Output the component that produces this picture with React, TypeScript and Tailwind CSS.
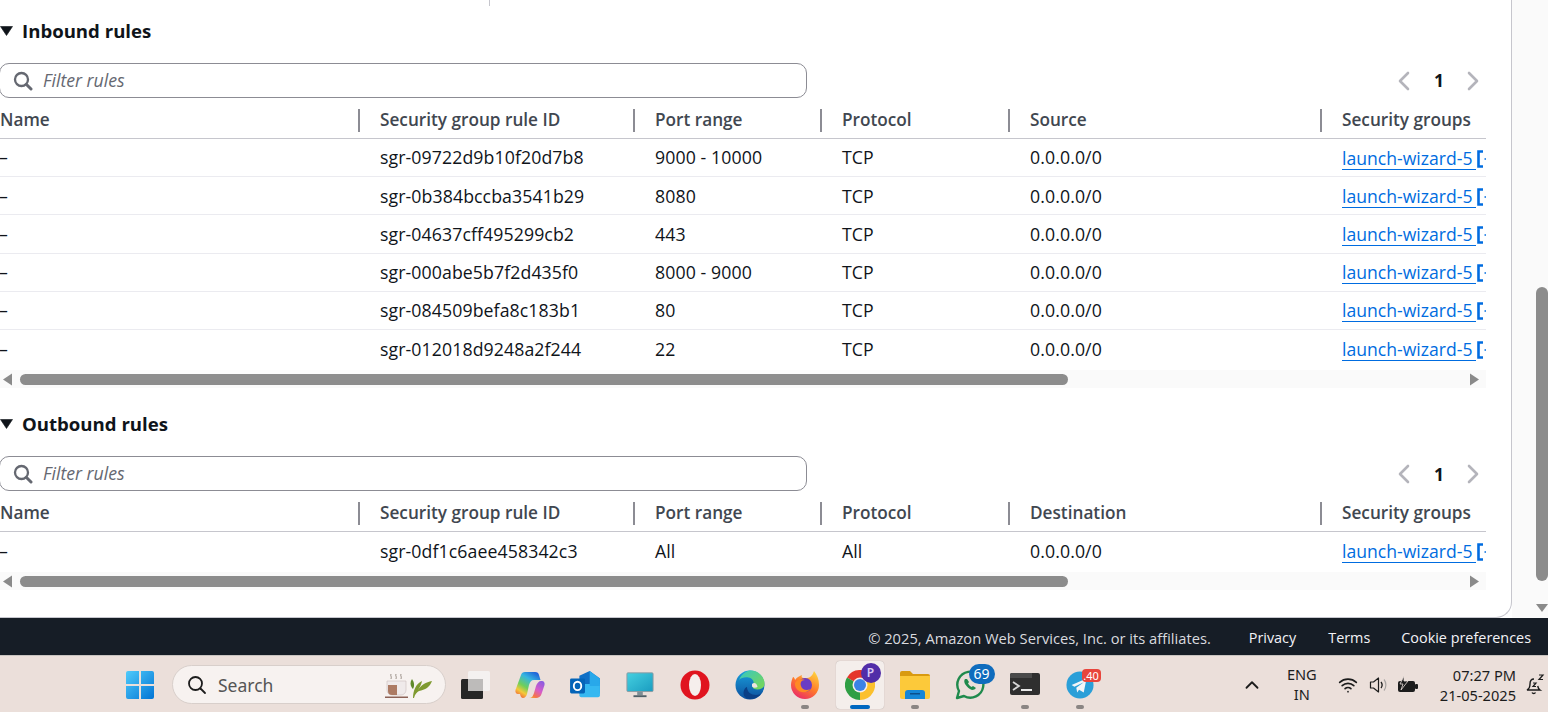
import { ChevronUp, Wifi } from "lucide-react";

const inbound = [
  { id: "sgr-09722d9b10f20d7b8", port: "9000 - 10000" },
  { id: "sgr-0b384bccba3541b29", port: "8080" },
  { id: "sgr-04637cff495299cb2", port: "443" },
  { id: "sgr-000abe5b7f2d435f0", port: "8000 - 9000" },
  { id: "sgr-084509befa8c183b1", port: "80" },
  { id: "sgr-012018d9248a2f244", port: "22" },
];

const colsClass = "grid grid-cols-[358px_275px_187px_188px_312px_166px]";

function HeaderCell({ label, first }: { label: string; first?: boolean }) {
  return (
    <div className={`flex h-[23px] items-center whitespace-nowrap pb-[2px] ${first ? "" : "border-l-2 border-[#8c8c94] pl-[20px]"}`}>
      <span className="text-[17.2px] font-semibold text-[#414750]">{label}</span>
    </div>
  );
}

function Row({ id, port, protocol, source, last }: { id: string; port: string; protocol: string; source: string; last?: boolean }) {
  return (
    <div className={`${colsClass} h-[38.2px] items-center text-[17.7px] tracking-[0.1px] text-[#0f141a] ${last ? "" : "border-b border-[#ebebf0]"}`}>
      <div className="-ml-px font-medium">–</div>
      <div className="pl-[22px]">{id}</div>
      <div className="pl-[22px]">{port}</div>
      <div className="pl-[22px]">{protocol}</div>
      <div className="pl-[22px]">{source}</div>
      <div className="flex items-center overflow-hidden whitespace-nowrap pl-[22px] pt-[2px]">
        <span className="shrink-0 border-b border-[#006ce0] pr-[4px] text-[17.6px] leading-[21px] tracking-normal text-[#006ce0]">launch-wizard-5</span>
        <svg width="10" height="18" viewBox="0 0 10 18" className="ml-[1px] shrink-0" fill="none" stroke="#006ce0">
          <path d="M6 1.500H1.500v15H6" strokeWidth="2.600" />
          <path d="M7.500 9H10" strokeWidth="1.400" />
        </svg>
      </div>
    </div>
  );
}

function HScroll() {
  return (
    <div className="mt-[2px] flex h-[18px] w-[1486px] items-center bg-[#fafafa]">
      <svg width="12" height="13" viewBox="0 0 12 13" className="ml-[1px] shrink-0"><path d="M11 .5v12L2 6.500z" fill="#8a8a8a" /></svg>
      <div className="ml-[7px] h-[11px] w-[1048px] rounded-full bg-[#8c8c8c]" />
      <svg width="12" height="13" viewBox="0 0 12 13" className="ml-auto mr-[5px] shrink-0"><path d="M1 .5v12l9-6z" fill="#8a8a8a" /></svg>
    </div>
  );
}

function RulesSection({ title, lastCol, children }: { title: string; lastCol: string; children: React.ReactNode }) {
  return (
    <section>
      <div className="flex h-[24px] items-center">
        <svg width="13" height="10" viewBox="0 0 13 10" className="shrink-0"><path d="M0.500 .5h12L6.500 9.500z" fill="#0f141a" stroke="#0f141a" strokeWidth=".6" strokeLinejoin="round" /></svg>
        <h2 className="ml-[9px] text-[18.6px] font-bold text-[#0f141a]">{title}</h2>
      </div>
      <div className="mt-[20px] flex w-[1486px] items-center justify-between">
        <div className="flex h-[35px] w-[808px] -translate-x-[1px] items-center rounded-[10px] border border-[#8c8c94] pl-[13px]">
          <svg width="20" height="20" viewBox="0 0 20 20" fill="none" stroke="#656871" strokeLinecap="round">
            <circle cx="8.500" cy="8.500" r="6.500" strokeWidth="2.300" />
            <path d="M13.500 13.500L18 18" strokeWidth="3" />
          </svg>
          <span className="ml-[10px] text-[17.7px] italic text-[#656871]">Filter rules</span>
        </div>
        <div className="flex items-center">
          <svg width="12" height="20" viewBox="0 0 12 20" fill="none" stroke="#b4b4bb" strokeWidth="2.600" strokeLinecap="round" strokeLinejoin="round"><path d="M10 2L2 10l8 8" /></svg>
          <span className="mx-[24px] w-[9px] text-center text-[17.5px] font-bold text-[#0f141a]">1</span>
          <svg width="12" height="20" viewBox="0 0 12 20" fill="none" stroke="#b4b4bb" strokeWidth="2.600" strokeLinecap="round" strokeLinejoin="round" className="mr-[7px]"><path d="M2 2l8 8-8 8" /></svg>
        </div>
      </div>
      <div className="mt-[11px] w-[1486px] overflow-hidden">
        <div className={`${colsClass} h-[30px] items-start border-b border-[#c6c6cd]`}>
          <HeaderCell first label="Name" />
          <HeaderCell label="Security group rule ID" />
          <HeaderCell label="Port range" />
          <HeaderCell label="Protocol" />
          <HeaderCell label={lastCol} />
          <HeaderCell label="Security groups" />
        </div>
        {children}
      </div>
      <HScroll />
    </section>
  );
}

function WinLogo() {
  return (
    <svg width="30" height="30" viewBox="0 0 30 30">
      <defs>
        <linearGradient id="win" x1="0" y1="0" x2="1" y2="1">
          <stop offset="0" stopColor="#4fcbfb" />
          <stop offset="1" stopColor="#0274d4" />
        </linearGradient>
      </defs>
      <path d="M1 3a2 2 0 0 1 2-2h11v13H1zM16 1h11a2 2 0 0 1 2 2v11H16zM1 16h13v13H3a2 2 0 0 1-2-2zM16 16h13v11a2 2 0 0 1-2 2H16z" fill="url(#win)" />
    </svg>
  );
}

function TeaLeaf() {
  return (
    <svg width="54" height="30" viewBox="0 0 54 30">
      <path d="M7 4c-1 2 1 2 0 5M12 4c-1 2 1 2 0 5M17 4c-1 2 1 2 0 5" stroke="#9a9088" fill="none" />
      <path d="M3 11h19v9a5 5 0 0 1-5 5H8a5 5 0 0 1-5-5z" fill="#efeaea" stroke="#c9bdbd" strokeWidth=".6" />
      <path d="M4 15h9v10H8a4 4 0 0 1-4-4z" fill="#ac7a63" />
      <path d="M1 26.500h23v1.500H1z" fill="#8c6256" />
      <path d="M29 28c0-8 3-14 9-17-1 5-3 7-4 9 3-5 8-8 14-9-2 6-7 9-13 10-2 1-4 3-5 7z" fill="#7f9a30" />
      <path d="M28 18c-2-3-2-6 0-9 2 3 3 6 1 10z" fill="#5f8a2a" />
    </svg>
  );
}

function StackIcon() {
  return (
    <svg width="30" height="28" viewBox="0 0 30 28">
      <rect x="1" y="8" width="22" height="20" rx="1.500" fill="#262626" />
      <rect x="8" y="0" width="22" height="20" rx="1.500" fill="#f4f1f0" />
      <rect x="8" y="8" width="15" height="12" fill="#bdbbba" />
    </svg>
  );
}

function CopilotIcon() {
  return (
    <svg width="30" height="28" viewBox="0 0 30 28">
      <defs>
        <linearGradient id="cpa" x1="0.800" y1="0" x2="0.200" y2="1">
          <stop offset="0" stopColor="#1f5fd8" />
          <stop offset=".3" stopColor="#35b6e0" />
          <stop offset=".6" stopColor="#6fcf5a" />
          <stop offset=".8" stopColor="#f5c93a" />
          <stop offset="1" stopColor="#f0603a" />
        </linearGradient>
        <linearGradient id="cpb" x1="0.800" y1="0" x2="0.200" y2="1">
          <stop offset="0" stopColor="#8a5ce0" />
          <stop offset=".5" stopColor="#d85cc8" />
          <stop offset=".85" stopColor="#f5744a" />
          <stop offset="1" stopColor="#f5a03a" />
        </linearGradient>
      </defs>
      <path d="M10 1h10c2.500 0 3.500 1 4 3l1.500 5H19c-3 0-4 2-5 5l-2 9c-.5 2-2 4-4 4-1.500 0-2.500-1.500-3-4H3c-2 0-3-2-2.500-4L6 4c.5-2 2-3 4-3z" fill="url(#cpa)" />
      <path d="M14 27c3 0 4-2 5-5l2-7c1-3 3-5 5-5h1c2 0 3 2 2.500 4l-3 9c-.7 2.500-3 4-5.500 4z" fill="url(#cpb)" />
    </svg>
  );
}

function OutlookIcon() {
  return (
    <svg width="30" height="28" viewBox="0 0 32 30">
      <path d="M10 5l11-5 11 8v16H10z" fill="#0f6fc6" />
      <path d="M10 14h22v12a2 2 0 0 1-2 2H12a2 2 0 0 1-2-2z" fill="#35b8f1" />
      <path d="M21 0l11 8v8H21z" fill="#28a8ea" />
      <rect x="0" y="8" width="16" height="16" rx="1.500" fill="#0364b8" />
      <ellipse cx="8" cy="16" rx="4" ry="4.500" fill="none" stroke="#fff" strokeWidth="2" />
    </svg>
  );
}

function MonitorIcon() {
  return (
    <svg width="28" height="28" viewBox="0 0 30 30">
      <defs>
        <linearGradient id="mon" x1="0" y1="0" x2="1" y2="1">
          <stop offset="0" stopColor="#45d0e0" />
          <stop offset="1" stopColor="#1a9cc0" />
        </linearGradient>
      </defs>
      <rect x="1" y="2" width="28" height="20" rx="1" fill="url(#mon)" stroke="#8e9aa0" />
      <path d="M12 22h6v4h-6z" fill="#7f8f96" />
      <rect x="8" y="26" width="14" height="2" fill="#4f6068" />
    </svg>
  );
}

function OperaIcon() {
  return (
    <svg width="30" height="30" viewBox="0 0 30 30">
      <circle cx="15" cy="15" r="14.500" fill="#e0141f" />
      <ellipse cx="15" cy="15" rx="6" ry="11" fill="#f5eeec" />
    </svg>
  );
}

function EdgeIcon() {
  return (
    <svg width="30" height="30" viewBox="0 0 30 30">
      <defs>
        <linearGradient id="edgeb" x1="0" y1="0" x2="0" y2="1">
          <stop offset="0" stopColor="#1aa0dc" />
          <stop offset="1" stopColor="#0c4f9e" />
        </linearGradient>
        <linearGradient id="edgeg" x1="0" y1="0" x2="1" y2="1">
          <stop offset="0" stopColor="#36c7c4" />
          <stop offset="1" stopColor="#7dd84e" />
        </linearGradient>
      </defs>
      <circle cx="15" cy="15" r="14.500" fill="url(#edgeb)" />
      <path d="M4 10C7 3 12 .5 16 .5c7 0 13.500 6 13.500 13 0 4-3 6-7 6-3 0-5-1-5-3 2-2 2-8-4-9C9 7 6 8 4 10z" fill="url(#edgeg)" />
      <path d="M12 17c0 5 4 8 9 8 3 0 5-1 6-3-2 4-6 7-12 7-2 0-4-1-5-2-3-3-1-9 2-10z" fill="#0a3f86" />
      <path d="M17 14c2-2 5-1 5.500 3-2 1-4 1-5.500-.5z" fill="#efe4df" />
    </svg>
  );
}

function FirefoxIcon() {
  return (
    <svg width="30" height="30" viewBox="0 0 30 30">
      <defs>
        <linearGradient id="ffx" x1="0.800" y1="0" x2="0.200" y2="1">
          <stop offset="0" stopColor="#ffd23c" />
          <stop offset=".5" stopColor="#ff7a2a" />
          <stop offset="1" stopColor="#e8246e" />
        </linearGradient>
      </defs>
      <path d="M24 1c3 4 5 8 5 14a14 14 0 0 1-28 0c0-3 1-6 2-8 1 0 2 2 2 3 2-3 5-4 7-5-1 2 0 3 2 3 4 0 8 0 10-7z" fill="url(#ffx)" />
      <circle cx="15" cy="15" r="7" fill="#6a3cc4" />
      <path d="M5 13c2-3 6-5 10-3-4 0-5 3-4 6 1 4 6 5 9 3-3 5-11 4-14-1-1-2-1-3-1-5z" fill="#ff8a24" />
    </svg>
  );
}

function ChromeIcon() {
  return (
    <svg width="30" height="30" viewBox="0 0 30 30">
      <path d="M15 15L2 7.500A15 15 0 0 1 28 7.500z" fill="#e5352b" />
      <path d="M15 15L28 7.500A15 15 0 0 1 15 30z" fill="#fbc02d" />
      <path d="M15 15L15 30A15 15 0 0 1 2 7.500z" fill="#2f9e44" />
      <circle cx="15" cy="15" r="7.500" fill="#f5eeec" />
      <circle cx="15" cy="15" r="6" fill="#3b82e6" />
    </svg>
  );
}

function FolderIcon() {
  return (
    <svg width="30" height="28" viewBox="0 0 30 28">
      <path d="M0 2a2 2 0 0 1 2-2h8l3 3h15a2 2 0 0 1 2 2v3H0z" fill="#d99a10" />
      <path d="M0 5h30v21a2 2 0 0 1-2 2H2a2 2 0 0 1-2-2z" fill="#fcc93a" />
      <path d="M5 22a3 3 0 0 1 3-3h14a3 3 0 0 1 3 3v6H5z" fill="#1586d6" />
      <rect x="10" y="22" width="10" height="1.500" fill="#0b4f8c" />
    </svg>
  );
}

function WhatsappIcon() {
  return (
    <svg width="30" height="30" viewBox="0 0 30 30" fill="none" className="mt-[1px]">
      <path d="M2 28l2-7a13 13 0 1 1 5 5z" stroke="#1f8a4c" strokeWidth="2.400" strokeLinejoin="round" />
      <path d="M10 9c-1 1-1 3 0 5 2 3 4 5 7 6 2 0 3-1 4-2l-3-2-1.500 1c-1.500-1-2.500-2-3.500-3.500l1-1.500-2-3z" fill="#1f8a4c" />
    </svg>
  );
}

function TerminalIcon() {
  return (
    <svg width="30" height="23" viewBox="0 0 30 23">
      <rect width="30" height="22" y="0" rx="2" fill="#2f2f2f" />
      <path d="M2 0h20v5H0V2a2 2 0 0 1 2-2z" fill="#4a4a4a" />
      <path d="M3 9l6 4-6 4" stroke="#d8d8d8" strokeWidth="1.800" fill="none" />
      <rect x="11" y="16" width="11" height="2" fill="#e8e8e8" />
    </svg>
  );
}

function TelegramIcon() {
  return (
    <svg width="28" height="28" viewBox="0 0 30 30">
      <circle cx="15" cy="15" r="14.500" fill="#2a9fd8" />
      <path d="M6 15l16-7-3 15-5-3-2 3-1-5 8-6-10 5z" fill="#f3f5f7" />
    </svg>
  );
}

function TaskIcon({ children, dot, active }: { children: React.ReactNode; dot?: boolean; active?: boolean }) {
  return (
    <div className="flex w-[55px] shrink-0 justify-center">
      <div className={`relative flex h-[48px] w-[48px] items-center justify-center rounded-[4px] ${active ? "bg-[#f4eeeb] shadow-[0_0_1px_rgba(0,0,0,0.3)]" : ""}`}>
        {children}
        {dot && <span className="absolute bottom-0 left-1/2 h-[4px] w-[8px] -translate-x-1/2 rounded-full bg-[#8a8583]" />}
        {active && <span className="absolute bottom-0 left-1/2 h-[4px] w-[20px] -translate-x-1/2 rounded-full bg-[#0067c0]" />}
      </div>
    </div>
  );
}

export default function App() {
  return (
    <div className="flex h-[712px] w-[1548px] flex-col overflow-hidden bg-white font-['Open_Sans','Noto_Sans',sans-serif]">
      <div className="flex h-[618px] min-h-0">
        <main className="relative w-[1512px] rounded-br-[16px] border-r border-b border-[#c6c6cd] bg-white pt-[19px]">
          <div className="absolute left-[489px] top-0 h-[6px] w-px bg-[#c6c6cd]" />
          <RulesSection title="Inbound rules" lastCol="Source">
            {inbound.map((r, i) => (
              <Row key={r.id} id={r.id} port={r.port} protocol="TCP" source="0.0.0.0/0" last={i === inbound.length - 1} />
            ))}
          </RulesSection>
          <div className="h-[24px]" />
          <RulesSection title="Outbound rules" lastCol="Destination">
            <Row last id="sgr-0df1c6aee458342c3" port="All" protocol="All" source="0.0.0.0/0" />
          </RulesSection>
        </main>
        <aside className="flex w-[36px] flex-col bg-[#fafafa]">
          <div className="relative flex-1">
            <div className="absolute right-0 top-[287px] h-[294px] w-[12px] rounded-full bg-[#8c8c8c]" />
            <svg width="12" height="8" viewBox="0 0 12 8" className="absolute right-0 bottom-[6px]"><path d="M0 0h12L6 8z" fill="#8a8a8a" /></svg>
          </div>
        </aside>
      </div>
      <footer className="flex h-[37px] shrink-0 items-center justify-end bg-[#161d26] pr-[17px] pt-[3px] text-[14.4px] text-[#d9dadf]">
        <span className="text-[14.7px]">© 2025, Amazon Web Services, Inc. or its affiliates.</span>
        <span className="ml-[38px] font-medium text-[#f3f3f7]">Privacy</span>
        <span className="ml-[32px] font-medium text-[#f3f3f7]">Terms</span>
        <span className="ml-[31px] font-medium text-[#f3f3f7]">Cookie preferences</span>
      </footer>
      <div className="flex h-[57px] shrink-0 items-center border-t border-[#c8c3c0] bg-[#ebdfda] pt-px font-['Noto_Sans',sans-serif]">
        <div className="ml-[125px]"><WinLogo /></div>
        <div className="ml-[17px] flex h-[39px] w-[274px] items-center rounded-full border border-[#d8cfcb] bg-[#f7f2f0] pl-[14px] pr-[7px]">
          <svg width="20" height="20" viewBox="0 0 20 20" fill="none" stroke="#1c1c1c" strokeWidth="1.800" strokeLinecap="round">
            <circle cx="8.500" cy="8.500" r="6.500" />
            <path d="M13.500 13.500L18 18" />
          </svg>
          <span className="ml-[11px] pt-px text-[17.5px] text-[#555]">Search</span>
          <span className="ml-auto flex"><TeaLeaf /></span>
        </div>
        <div className="ml-px flex items-center">
          <TaskIcon><StackIcon /></TaskIcon>
          <TaskIcon><CopilotIcon /></TaskIcon>
          <TaskIcon><OutlookIcon /></TaskIcon>
          <TaskIcon><MonitorIcon /></TaskIcon>
          <TaskIcon><OperaIcon /></TaskIcon>
          <TaskIcon><EdgeIcon /></TaskIcon>
          <TaskIcon dot><FirefoxIcon /></TaskIcon>
          <TaskIcon active>
            <ChromeIcon />
            <span className="absolute right-[3px] top-[2px] flex h-[20px] w-[20px] items-center justify-center rounded-full bg-[#512da8] text-[12px] font-semibold text-[#d9c9f5]">P</span>
          </TaskIcon>
          <TaskIcon dot><FolderIcon /></TaskIcon>
          <TaskIcon>
            <WhatsappIcon />
            <span className="absolute -right-[1px] top-[3px] flex h-[20px] w-[26px] items-center justify-center rounded-full bg-[#0f6cbd] text-[14px] text-white">69</span>
          </TaskIcon>
          <TaskIcon dot><TerminalIcon /></TaskIcon>
          <TaskIcon dot>
            <TelegramIcon />
            <span className="absolute right-[3px] top-[8px] flex h-[13px] w-[19px] items-center justify-center overflow-hidden rounded-[4px] bg-[#e8453c] text-[11px] leading-none text-white">.40</span>
          </TaskIcon>
        </div>
        <div className="ml-auto flex items-center text-[#1c1c1c]">
          <ChevronUp size={22} strokeWidth={2} />
          <div className="ml-[21px] flex w-[36px] -translate-y-px flex-col items-center text-[14.6px] leading-[20px]"><span>ENG</span><span>IN</span></div>
          <Wifi size={20} strokeWidth={2} className="ml-[18px]" />
          <svg width="22" height="18" viewBox="0 0 22 18" fill="none" className="ml-[11px]">
            <path d="M1.500 6h3l5-4v14l-5-4h-3z" stroke="#1c1c1c" strokeWidth="1.200" strokeLinejoin="round" />
            <path d="M12 6c1.300 1.700 1.300 4.300 0 6" stroke="#1c1c1c" strokeWidth="1.300" />
            <path d="M15 3.500c2.500 3 2.500 8 0 11" stroke="#a8a4a2" strokeWidth="1.200" />
          </svg>
          <svg width="22" height="18" viewBox="0 0 22 18" className="ml-[6px]">
            <rect x="1" y="5" width="17" height="11" rx="2" fill="#1c1c1c" />
            <rect x="18" y="8" width="3" height="5" rx="1" fill="#1c1c1c" />
            <path d="M7 0L3 8h3l-2 6 7-9H7z" fill="#1c1c1c" stroke="#ebdfda" strokeWidth=".8" />
          </svg>
          <div className="ml-[21px] flex flex-col items-end text-[14.6px] leading-[20px]"><span>07:27 PM</span><span>21-05-2025</span></div>
          <svg width="20" height="22" viewBox="0 0 20 22" fill="none" stroke="#1c1c1c" className="ml-[9px] mr-[3px]">
            <path d="M9 5C6 5 5 7 5 10c0 3-1 5-3 6h13c-1.500-1-2-2.500-2.300-4M7 18.500a2 2 0 0 0 3.500 0" strokeWidth="1.400" />
            <path d="M14 1h4l-4 4.500h4M8 9h3l-3 3.500h3" strokeWidth="1.200" />
          </svg>
        </div>
      </div>
    </div>
  );
}
